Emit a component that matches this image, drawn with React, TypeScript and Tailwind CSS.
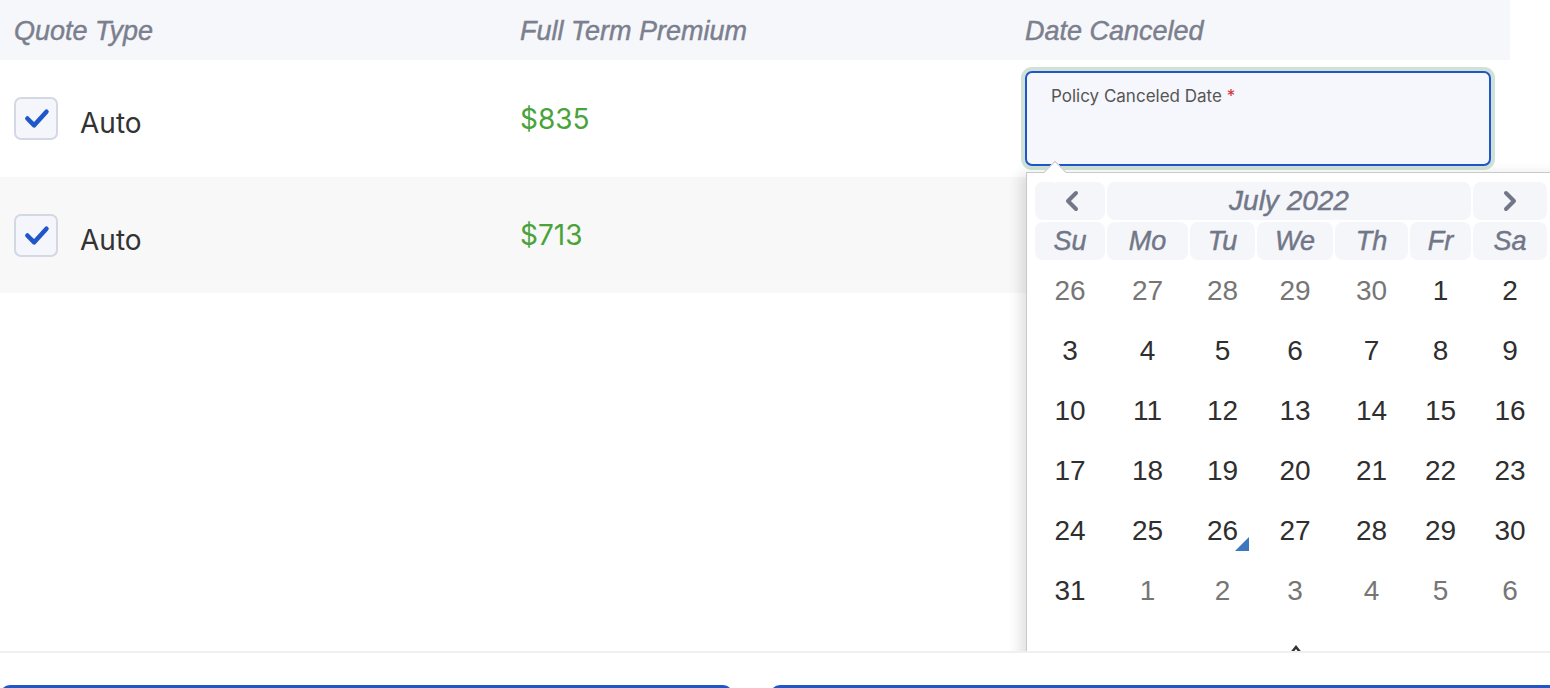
import React from "react";

const cols = "grid-cols-[70px_81px_65px_76px_73px_61px_74px]";

function Check() {
  return (
    <div className="w-[44px] h-[43px] rounded-[7px] border-2 border-[#d3d8e4] bg-[#f4f6fb] shrink-0 flex items-center justify-center">
      <svg width="44" height="43" viewBox="0 0 44 43">
        <path d="M12.5 21.5 L20 29 L33.5 14" fill="none" stroke="#1f56c9" strokeWidth="5" strokeLinecap="round" strokeLinejoin="round" />
      </svg>
    </div>
  );
}

function Chevron({ dir }: { dir: "left" | "right" }) {
  return (
    <svg width="16" height="22" viewBox="0 0 16 22">
      <path
        d={dir === "left" ? "M12 3 L4 11 L12 19" : "M4 3 L12 11 L4 19"}
        fill="none"
        stroke="#727788"
        strokeWidth="4"
        strokeLinecap="round"
        strokeLinejoin="round"
      />
    </svg>
  );
}

const weeks: { d: number; muted?: boolean; sel?: boolean }[][] = [
  [{ d: 26, muted: true }, { d: 27, muted: true }, { d: 28, muted: true }, { d: 29, muted: true }, { d: 30, muted: true }, { d: 1 }, { d: 2 }],
  [{ d: 3 }, { d: 4 }, { d: 5 }, { d: 6 }, { d: 7 }, { d: 8 }, { d: 9 }],
  [{ d: 10 }, { d: 11 }, { d: 12 }, { d: 13 }, { d: 14 }, { d: 15 }, { d: 16 }],
  [{ d: 17 }, { d: 18 }, { d: 19 }, { d: 20 }, { d: 21 }, { d: 22 }, { d: 23 }],
  [{ d: 24 }, { d: 25 }, { d: 26, sel: true }, { d: 27 }, { d: 28 }, { d: 29 }, { d: 30 }],
  [{ d: 31 }, { d: 1, muted: true }, { d: 2, muted: true }, { d: 3, muted: true }, { d: 4, muted: true }, { d: 5, muted: true }, { d: 6, muted: true }],
];

const days = ["Su", "Mo", "Tu", "We", "Th", "Fr", "Sa"];

const headFont =
  "font-['Liberation_Sans',sans-serif] italic text-[#727788] [-webkit-text-stroke:0.45px_#727788]";

function Calendar() {
  return (
    <div className="absolute left-[1026px] top-[172px] w-[560px] h-[520px] bg-white border-l border-t border-[#c9c9c9] shadow-[-6px_2px_12px_rgba(0,0,0,0.12)] pl-[8px] pt-[9px]">
      <div className="absolute top-[-9px] left-[20px] w-[16px] h-[16px] rotate-45 bg-white border-l border-t border-[#c9c9c9]" />
      <div className={`grid ${cols} gap-[2px]`}>
        <div className="h-[38px] rounded-[8px] bg-[#f5f6fa] flex items-center justify-center pl-[3px]">
          <Chevron dir="left" />
        </div>
        <div className={`col-span-5 h-[38px] rounded-[8px] bg-[#f5f6fa] flex items-center justify-center text-[28px] ${headFont}`}>
          July 2022
        </div>
        <div className="h-[38px] rounded-[8px] bg-[#f5f6fa] flex items-center justify-center">
          <Chevron dir="right" />
        </div>
        {days.map((d) => (
          <div key={d} className={`h-[38px] rounded-[8px] bg-[#f5f6fa] flex items-center justify-center text-[27px] ${headFont}`}>
            {d}
          </div>
        ))}
      </div>
      <div className={`grid ${cols} gap-x-[2px] mt-[1px] font-['Liberation_Sans',sans-serif]`}>
        {weeks.flat().map((c, i) => (
          <div key={i} className="h-[60px] flex items-center justify-center">
            <span className={`relative text-[28px] leading-none ${c.muted ? "text-[#767676]" : "text-[#2f2f2f]"}`}>
              {c.d}
              {c.sel && (
                <svg className="absolute right-[-11px] bottom-[-6px]" width="14" height="14" viewBox="0 0 14 14">
                  <path d="M14 0 L14 14 L0 14 Z" fill="#3d77bd" />
                </svg>
              )}
            </span>
          </div>
        ))}
        <div className="col-start-4 h-[8px] flex justify-center mt-[24px] pl-[2px]">
          <svg width="12" height="8" viewBox="0 0 12 8">
            <path d="M2 7 L6 2 L10 7" fill="none" stroke="#333" strokeWidth="2.5" />
          </svg>
        </div>
      </div>
    </div>
  );
}

export default function App() {
  return (
    <div className="w-[1550px] h-[688px] overflow-hidden bg-white font-['Inter',sans-serif]">
      <div className="relative h-[651px] overflow-hidden">
        <div className="w-[1510px]">
          <div className="grid grid-cols-[506px_505px_499px] h-[60px] bg-[#f6f7fb] items-center pt-[3px] font-['Liberation_Sans',sans-serif] italic text-[27px] text-[#7b7f8e] [-webkit-text-stroke:0.45px_#7b7f8e]">
            <div className="pl-[14px]">Quote Type</div>
            <div className="pl-[14px]">Full Term Premium</div>
            <div className="pl-[14px]">Date Canceled</div>
          </div>
          <div className="grid grid-cols-[506px_505px_499px] h-[117px] items-center">
            <div className="pl-[14px] flex items-center gap-[22px]">
              <Check />
              <span className="text-[28px] text-[#333] mt-[9px]">Auto</span>
            </div>
            <div className="pl-[14px] text-[28px] text-[#4aa33a]">$835</div>
            <div className="pl-[14px]">
              <div className="w-[466px] h-[95px] rounded-[7px] border-2 border-[#1f56c9] bg-[#f5f7fc] shadow-[0_0_0_4px_#d0e2d6] pl-[24px] pt-[13px] leading-[20px]">
                <span className="text-[17px] text-[#555]">Policy Canceled Date </span>
                <span className="text-[17px] text-[#d32f2f]">*</span>
              </div>
            </div>
          </div>
          <div className="grid grid-cols-[506px_505px_499px] h-[116px] items-center bg-[#f8f8f8]">
            <div className="pl-[14px] flex items-center gap-[22px]">
              <Check />
              <span className="text-[28px] text-[#333] mt-[9px]">Auto</span>
            </div>
            <div className="pl-[14px] text-[28px] text-[#4aa33a]">$713</div>
            <div />
          </div>
        </div>
        <Calendar />
      </div>
      <div className="h-[2px] bg-[#f0f0f0]" />
      <div className="pt-[32px] flex gap-[37px]">
        <div className="w-[733px] h-[50px] rounded-[10px] bg-[#1f56c9] shrink-0" />
        <div className="w-[800px] h-[50px] rounded-[10px] bg-[#1f56c9] shrink-0" />
      </div>
    </div>
  );
}
